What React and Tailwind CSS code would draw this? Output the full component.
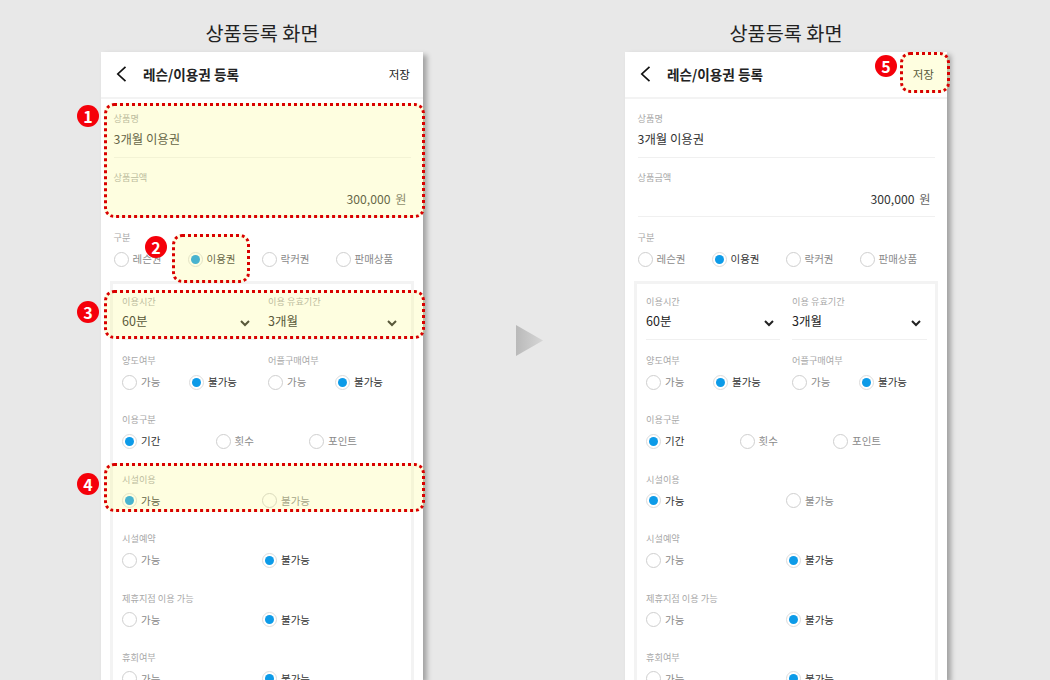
const font = { fontFamily: '"Noto Sans CJK KR", "Noto Sans", sans-serif' };

const Radio = ({ label, checked, className = "" }) => (
  <div className={`flex h-4 items-center gap-[4px] ${className}`}>
    <span
      className={`flex h-[15px] w-[15px] shrink-0 items-center justify-center rounded-full border bg-white ${
        checked ? "border-[#dcdcdc]" : "border-[#cfcfcf]"
      }`}
    >
      {checked && <span className="h-[9px] w-[9px] rounded-full bg-[#0d9be8]" />}
    </span>
    <span className={`whitespace-nowrap text-[10.5px] leading-4 ${checked ? "text-[#333]" : "text-[#8a8a8a]"}`}>{label}</span>
  </div>
);

const Label = ({ children }) => <p className="h-3 text-[9.2px] leading-3 text-[#a8a8a8]">{children}</p>;

const OptionSection = ({ title, selected = "불가능" }) => (
  <div className="h-[59.4px]">
    <Label>{title}</Label>
    <div className="mt-2 flex">
      <Radio label="가능" checked={selected === "가능"} className="w-[140px]" />
      <Radio label="불가능" checked={selected === "불가능"} />
    </div>
  </div>
);

const Select = ({ title, value }) => (
  <div className="border-b border-[#f0f0f0] pb-[9px]">
    <Label>{title}</Label>
    <div className="mt-[5px] flex h-[18px] items-center justify-between pr-[5px]">
      <span className="text-[12.5px] leading-[18px] text-[#222]">{value}</span>
      <svg width="12" height="8" viewBox="0 0 12 8" fill="none" className="mt-[3px]">
        <path d="M2 2l4 4 4-4" stroke="#222" strokeWidth="2" />
      </svg>
    </div>
  </div>
);

// dotted callout lying over the phone, coordinates are relative to the phone
const Mark = ({ className }) => (
  <div className={`absolute rounded-[10px] border-[3px] border-dotted border-[#d90000] bg-[#fafa84]/25 ${className}`} />
);

const Badge = ({ n, className }) => (
  <div
    className={`absolute flex h-[22px] w-[22px] items-center justify-center rounded-full bg-[#f5000a] text-[16px] font-bold leading-none text-white ${className}`}
  >
    {n}
  </div>
);

const Phone = ({ children }) => (
  <div className="w-[322px] shrink-0">
    <h2 className="flex h-[52px] items-center justify-center pt-[14px] text-[19.7px] leading-none text-[#222]">상품등록 화면</h2>
    <div className="relative h-[628px] bg-white shadow-[4px_3px_5px_rgba(0,0,0,0.3)]">
      <div className="flex h-[47px] items-center justify-between border-b-2 border-[#f3f3f3] pl-[14px] pr-[13px]">
        <div className="flex items-center">
          <svg width="12" height="16" viewBox="0 0 12 16" fill="none">
            <path d="M10.5 0.8L2.8 8l7.7 7.2" stroke="#111" strokeWidth="1.7" />
          </svg>
          <span className="ml-[16px] text-[13.6px] font-bold text-[#222]">레슨/이용권 등록</span>
        </div>
        <span className="text-[11.6px] text-[#222]">저장</span>
      </div>

      <div className="px-[12.5px]">
        <div className="border-b border-[#f0f0f0] pb-[9px] pt-[13px]">
          <Label>상품명</Label>
          <p className="mt-[6px] h-[18px] text-[12.4px] leading-[18px] text-[#333]">3개월 이용권</p>
        </div>
        <div className="border-b border-[#f0f0f0] pb-[8px] pt-[13px]">
          <Label>상품금액</Label>
          <p className="mt-[7px] h-[18px] pr-[4px] text-right text-[12.2px] leading-[18px] text-[#333]">
            300,000 <span className="ml-[2px] text-[#666]">원</span>
          </p>
        </div>
        <div className="pt-[14px]">
          <Label>구분</Label>
          <div className="mt-2 flex">
            <Radio label="레슨권" className="w-[74px]" />
            <Radio label="이용권" checked className="w-[74px]" />
            <Radio label="락커권" className="w-[74px]" />
            <Radio label="판매상품" />
          </div>
        </div>
      </div>

      <div className="mx-[9px] mt-[14px] border-[3px] border-b-0 border-[#f3f3f3] px-[9px] pt-[11px]">
        <div className="grid grid-cols-[134px_135px] gap-x-[12px]">
          <Select title="이용시간" value="60분" />
          <Select title="이용 유효기간" value="3개월" />
        </div>
        <div className="h-[59.4px] pt-[14px]">
          <div className="grid grid-cols-[146px_1fr]">
            <div>
              <Label>양도여부</Label>
              <div className="mt-2 flex">
                <Radio label="가능" className="w-[67px]" />
                <Radio label="불가능" checked />
              </div>
            </div>
            <div>
              <Label>어플구매여부</Label>
              <div className="mt-2 flex">
                <Radio label="가능" className="w-[67px]" />
                <Radio label="불가능" checked />
              </div>
            </div>
          </div>
        </div>
        <div className="mt-[14px]">
          <div className="h-[59.4px]">
            <Label>이용구분</Label>
            <div className="mt-2 flex">
              <Radio label="기간" checked className="w-[93.5px]" />
              <Radio label="횟수" className="w-[93.5px]" />
              <Radio label="포인트" />
            </div>
          </div>
          <OptionSection title="시설이용" selected="가능" />
          <OptionSection title="시설예약" />
          <OptionSection title="제휴지점 이용 가능" />
          <OptionSection title="휴회여부" />
        </div>
      </div>
      {children}
    </div>
  </div>
);

export default function App() {
  return (
    <div className="flex h-[680px] w-[1050px] overflow-hidden bg-[#e8e8e8] pl-[101px]" style={font}>
      <Phone>
        <Mark className="left-[3px] top-[51px] h-[115px] w-[321px]" />
        <Mark className="left-[71px] top-[182px] h-[49px] w-[78px]" />
        <Mark className="left-[3px] top-[238px] h-[49px] w-[321px]" />
        <Mark className="left-[3px] top-[411px] h-[49px] w-[321px]" />
        <Badge n="1" className="-left-[24px] top-[53px]" />
        <Badge n="2" className="left-[44px] top-[184px]" />
        <Badge n="3" className="-left-[24px] top-[249px]" />
        <Badge n="4" className="-left-[24px] top-[421px]" />
      </Phone>
      <div className="ml-[93px] mr-[81px] mt-[325px] shrink-0">
        <svg width="28" height="31" viewBox="0 0 28 31">
          <defs>
            <linearGradient id="arrow" x1="0" y1="0" x2="1" y2="0">
              <stop offset="0" stopColor="#b9b9b9" />
              <stop offset="1" stopColor="#d6d6d6" />
            </linearGradient>
          </defs>
          <path d="M0 0L27 15.5L0 31Z" fill="url(#arrow)" />
        </svg>
      </div>
      <Phone>
        <Mark className="left-[275px] top-0 h-[41px] w-[50px]" />
        <Badge n="5" className="left-[250px] top-[3px]" />
      </Phone>
    </div>
  );
}
